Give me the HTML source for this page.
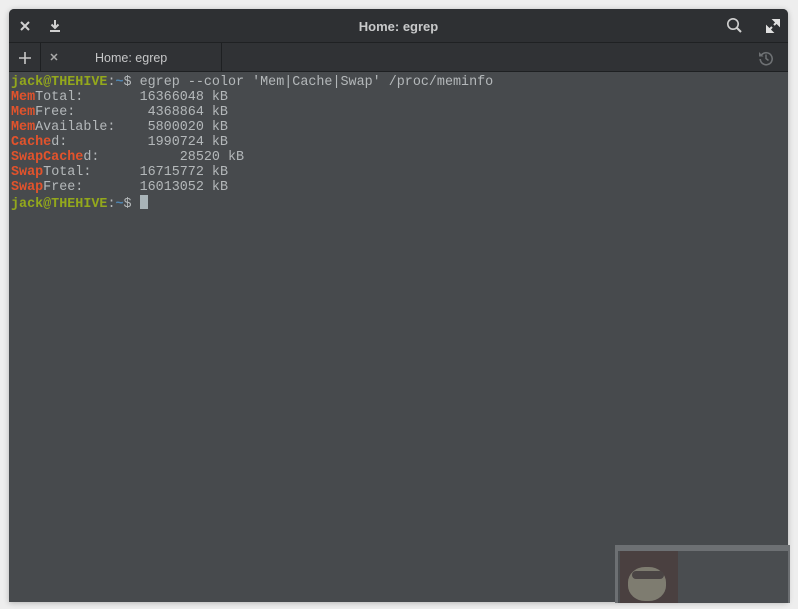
<!DOCTYPE html>
<html><head><meta charset="utf-8"><style>
*{margin:0;padding:0;box-sizing:border-box}
body{width:798px;height:609px;background:#eeeeee;position:relative;overflow:hidden;font-family:"Liberation Sans",sans-serif}
.win{position:absolute;left:9px;top:9px;width:779px;height:593px;background:#474a4d;border-radius:5px 5px 0 0;overflow:hidden;box-shadow:0 1px 6px rgba(0,0,0,.25)}
.hdr{position:absolute;left:0;top:0;width:100%;height:34px;background:#2e3033;border-bottom:1px solid #1f2123}
.title{position:absolute;left:0;right:0;top:10px;text-align:center;color:#c8c9ca;font-size:13px;font-weight:bold}
.tabs{position:absolute;left:0;top:34px;width:100%;height:29px;background:#303235;border-bottom:1px solid #1e2022}
.tab{position:absolute;left:31px;top:0;width:182px;height:29px;border-left:1px solid #1e2022;border-right:1px solid #1e2022}
.tabt{position:absolute;left:54px;top:8px;color:#c6c7c8;font-size:12.5px}
.term{position:absolute;left:2px;top:66px;font-family:"Liberation Mono",monospace;font-size:13.4px;line-height:15px;color:#b4b8ba;white-space:pre;font-weight:bold}
.term span.n{font-weight:normal}
.g{color:#93a81c}.b{color:#4f86b3}.r{color:#e2532c}
.cur{display:inline-block;width:8px;height:14px;background:#a9b4b8;vertical-align:-2px}
.ov{position:absolute;left:615px;top:545px;width:175px;height:58px;background:#4a4d50;border-top:6px solid #6d7073;border-left:3px solid #6d7073;border-right:2px solid #6d7073}
</style></head><body>
<div class="win">
 <div class="hdr">
  <svg style="position:absolute;left:11px;top:12px" width="10" height="10"><path d="M1 1L9 9M9 1L1 9" stroke="#d0d0d0" stroke-width="2"/></svg>
  <svg style="position:absolute;left:40px;top:10px" width="12" height="13"><path d="M6 1V9M2.5 5.5L6 9L9.5 5.5M1 12H11" stroke="#d0d0d0" stroke-width="2" fill="none"/></svg>
  <div class="title">Home: egrep</div>
  <svg style="position:absolute;left:717px;top:8px" width="17" height="17"><circle cx="7" cy="7" r="5.2" stroke="#d0d0d0" stroke-width="1.6" fill="none"/><path d="M11 11L15 15" stroke="#d0d0d0" stroke-width="2"/></svg>
  <svg style="position:absolute;left:757px;top:10px" width="14" height="14"><path d="M8 1H13V6ZM6 13H1V8ZM12 2L8 6M2 12L6 8" stroke="#e0e0e0" stroke-width="2" fill="#e0e0e0"/></svg>
 </div>
 <div class="tabs">
  <svg style="position:absolute;left:10px;top:9px" width="12" height="12"><path d="M6 0V12M0 6H12" stroke="#c8c8c8" stroke-width="1.6"/></svg>
  <div class="tab">
   <svg style="position:absolute;left:9px;top:10px" width="8" height="8"><path d="M1 1L7 7M7 1L1 7" stroke="#aaa" stroke-width="1.5"/></svg>
   <div class="tabt">Home: egrep</div>
  </div>
  <svg style="position:absolute;left:749px;top:7px" width="16" height="16"><path d="M3.5 5A6 6 0 1 1 2.2 9" stroke="#6e7174" stroke-width="1.6" fill="none"/><path d="M1 2V6.5H5.5Z" fill="#6e7174"/><path d="M8 4.5V8.5L10.5 10.5" stroke="#6e7174" stroke-width="1.5" fill="none"/></svg>
 </div>
 <div class="term"><span class="g">jack@THEHIVE</span><span class="n">:</span><span class="b">~</span><span class="n">$ egrep --color 'Mem|Cache|Swap' /proc/meminfo</span>
<span class="r">Mem</span><span class="n">Total:       16366048 kB</span>
<span class="r">Mem</span><span class="n">Free:         4368864 kB</span>
<span class="r">Mem</span><span class="n">Available:    5800020 kB</span>
<span class="r">Cache</span><span class="n">d:          1990724 kB</span>
<span class="r">SwapCache</span><span class="n">d:          28520 kB</span>
<span class="r">Swap</span><span class="n">Total:      16715772 kB</span>
<span class="r">Swap</span><span class="n">Free:       16013052 kB</span>
<span class="g">jack@THEHIVE</span><span class="n">:</span><span class="b">~</span><span class="n">$ </span><span class="cur"></span></div>
</div>
<div class="ov">
 <div style="position:absolute;left:2px;top:0;width:58px;height:52px;background:#4a4040"></div>
 <div style="position:absolute;left:10px;top:16px;width:38px;height:34px;border-radius:45%;background:#7e7c70"></div>
 <div style="position:absolute;left:14px;top:20px;width:32px;height:8px;background:#4a4444;border-radius:4px"></div>
</div>
</body></html>
